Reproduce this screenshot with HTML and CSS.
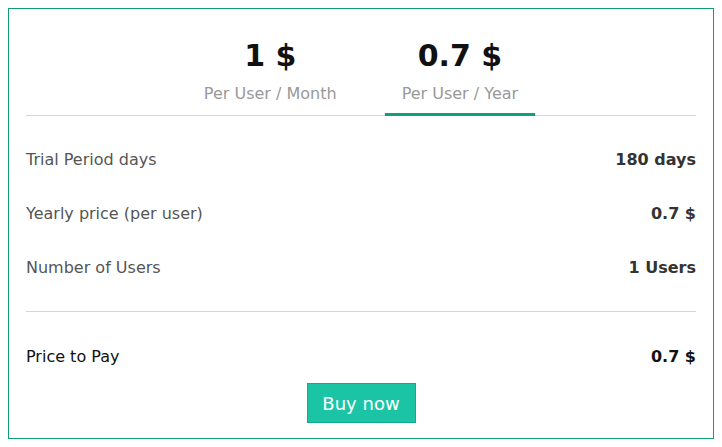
FILE: index.html
```html
<!DOCTYPE html>
<html lang="en">
<head>
  <meta charset="UTF-8">
  <title>Plan</title>
  <link rel="stylesheet" href="styles.css">
</head>
<body>
  <div class="card">
    <div class="tabs">
      <div class="tab">
        <span class="price">1 $</span>
        <span class="period">Per User / Month</span>
      </div>
      <div class="tab active">
        <span class="price">0.7 $</span>
        <span class="period">Per User / Year</span>
      </div>
    </div>
    <div class="details">
      <div class="row"><span class="label">Trial Period days</span><span class="value">180 days</span></div>
      <div class="row"><span class="label">Yearly price (per user)</span><span class="value">0.7 $</span></div>
      <div class="row"><span class="label">Number of Users</span><span class="value">1 Users</span></div>
    </div>
    <div class="total">
      <span class="label">Price to Pay</span><span class="value">0.7 $</span>
    </div>
    <div class="actions">
      <button class="buy">Buy now</button>
    </div>
  </div>
</body>
</html>
```

FILE: styles.css
```css
body {
  font-family: "DejaVu Sans", sans-serif;
  margin: 8px;
  background: #fff;
}
.card {
  border: 1px solid #139e72;
  padding: 0 17px;
  box-sizing: border-box;
  height: 431px;
}
.tabs {
  display: flex;
  justify-content: center;
  gap: 31px;
  border-bottom: 1px solid #d6d6d6;
  padding-top: 29px;
}
.tab {
  display: flex;
  flex-direction: column;
  align-items: center;
  padding: 0 17px 7px;
  margin-bottom: -1px;
  border-bottom: 3px solid transparent;
}
.tab.active {
  border-bottom-color: #109f7c;
}
.price {
  font-size: 30px;
  font-weight: bold;
  color: #111;
  line-height: 36px;
}
.period {
  font-size: 16px;
  color: #999;
  line-height: 24px;
  margin-top: 8px;
}
.details {
  padding: 17px 0 16px;
  border-bottom: 1px solid #d6d6d6;
}
.row, .total {
  display: flex;
  justify-content: space-between;
  font-size: 16px;
  line-height: 24px;
  padding: 15px 0;
}
.row .label {
  color: #555;
}
.row .value {
  color: #333;
  font-weight: bold;
}
.total {
  margin-top: 18px;
  padding-bottom: 14px;
  color: #111;
}
.total .value {
  font-weight: bold;
}
.actions {
  display: flex;
  justify-content: center;
}
.buy {
  font-family: inherit;
  font-size: 18px;
  color: #fff;
  background: #1cc4a6;
  border: 1px solid #15a98d;
  width: 109px;
  height: 40px;
  cursor: pointer;
}
```
